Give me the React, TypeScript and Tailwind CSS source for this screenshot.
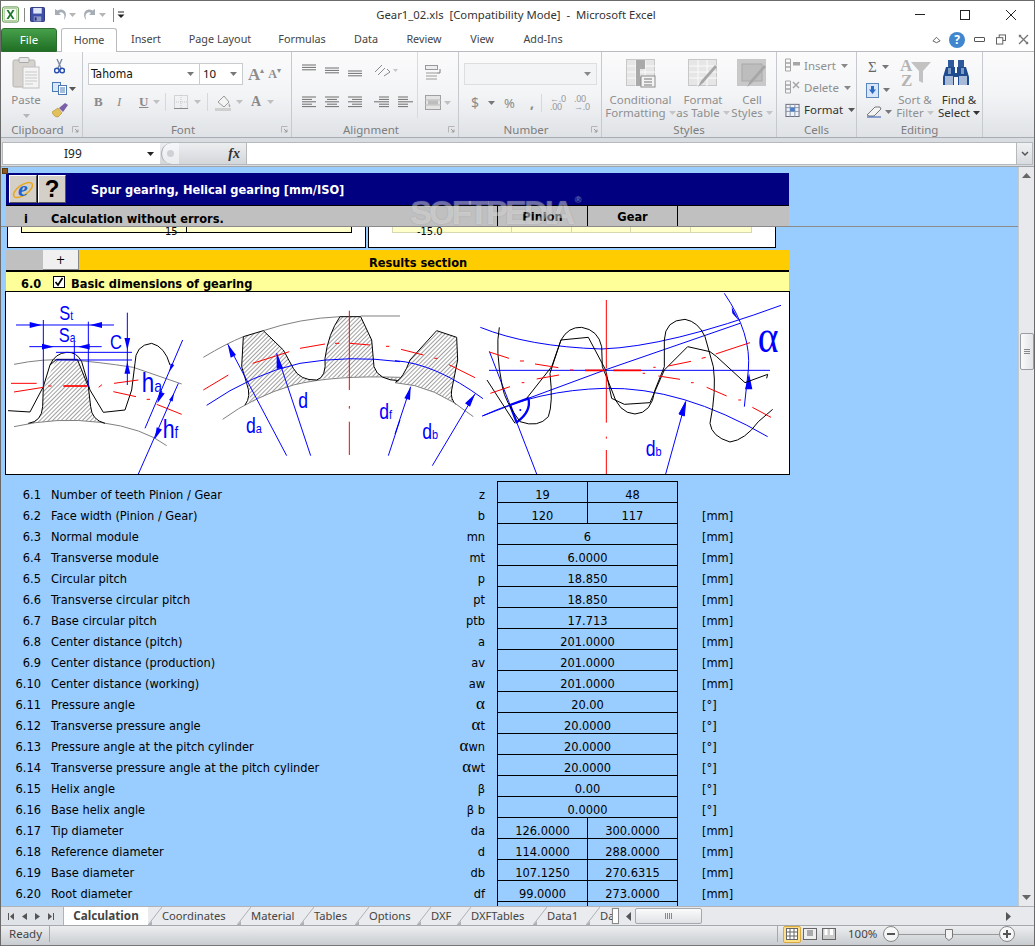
import React from "react";

const tahoma = "font-['DejaVu_Sans_Condensed','DejaVu_Sans',sans-serif]";

const Caret = ({ c = "#9a9a9a" }: { c?: string }) => (
  <svg width="7" height="4" viewBox="0 0 7 4" className="shrink-0"><path d="M0 0h7L3.500 4z" fill={c} /></svg>
);

const Lines = ({ rows }: { rows: [number, number][] }) => (
  <svg width="16" height="14" viewBox="0 0 16 14">
    {rows.map(([x, w], i) => (
      <rect key={i} x={x} y={i * 2.4 + 0.5} width={w} height="1" fill="#6f6f6f" />
    ))}
  </svg>
);

const Sep = () => <div className="w-px h-[18px] bg-[#d5d8dc]" />;

function ExcelLogo() {
  return (
    <svg width="17" height="17" viewBox="0 0 19 18">
      <rect x="0.500" y="0.500" width="18" height="17" rx="2" fill="#e9f4df" stroke="#4c8a3a" />
      <rect x="2.500" y="2.500" width="14" height="13" fill="#fff" stroke="#9fc58c" />
      <path d="M5 4l3.200 5L5 14h2.400L9.500 10.600 11.600 14H14l-3.200-5L14 4h-2.400L9.500 7.400 7.400 4z" fill="#1f7a2d" />
    </svg>
  );
}

function SaveIcon() {
  return (
    <svg width="15" height="15" viewBox="0 0 16 16">
      <rect x="0.500" y="0.500" width="15" height="15" rx="1" fill="#3f4fa8" stroke="#27307a" />
      <rect x="3.500" y="1" width="9" height="6" fill="#dfe6f7" />
      <rect x="4" y="10" width="8" height="5.500" fill="#8d99c9" />
      <rect x="5" y="11" width="2" height="3.500" fill="#27307a" />
    </svg>
  );
}

function UndoIcon({ flip }: { flip?: boolean }) {
  return (
    <svg width="14" height="13" viewBox="0 0 14 13" style={flip ? { transform: "scaleX(-1)" } : undefined}>
      <path d="M2 1v6h6L6 5c2-1.500 5-.5 5.500 3L11 12c2.500-3 2.500-7 .5-9C9.500 1 6.500 1 4.500 2.500z" fill="#a7adb5" />
    </svg>
  );
}

function PasteIcon() {
  return (
    <svg width="28" height="32" viewBox="0 0 28 32">
      <rect x="1" y="3" width="22" height="27" rx="1.500" fill="#d6d3cf" stroke="#b7b4b0" />
      <rect x="7" y="0.500" width="10" height="5" rx="1" fill="#e6e6e6" stroke="#aaa" />
      <rect x="11" y="10" width="16" height="21" fill="#f4f4f4" stroke="#c0c0c0" />
      <path d="M13 15h12M13 18h12M13 21h12M13 24h12M13 27h8" stroke="#c9c9c9" />
    </svg>
  );
}

function Scissors() {
  return (
    <svg width="11" height="15" viewBox="0 0 11 15">
      <path d="M3 0l4 9M8 0L4 9" stroke="#7e8aa0" strokeWidth="1.400" />
      <circle cx="2.800" cy="11.500" r="2.300" fill="none" stroke="#2a4fb0" strokeWidth="1.500" />
      <circle cx="8.200" cy="11.500" r="2.300" fill="none" stroke="#2a4fb0" strokeWidth="1.500" />
    </svg>
  );
}

function CopyIcon() {
  return (
    <svg width="15" height="13" viewBox="0 0 15 13">
      <rect x="0.500" y="0.500" width="8" height="9" fill="#dbe8f8" stroke="#4a79b5" />
      <rect x="6.500" y="3.500" width="8" height="9" fill="#fff" stroke="#4a79b5" />
      <path d="M8 6h5M8 8h5M8 10h5" stroke="#4a79b5" />
    </svg>
  );
}

function Brush() {
  return (
    <svg width="16" height="15" viewBox="0 0 16 15">
      <path d="M0 9l6-4 4 5-4 4C3 14 1 12 0 9z" fill="#e3c15a" stroke="#a98a2c" strokeWidth=".6" />
      <path d="M7 5l6-5 3 2-5 7z" fill="#7a5ea8" />
    </svg>
  );
}

function StylesIcon({ kind }: { kind: number }) {
  return (
    <svg width="30" height="29" viewBox="0 0 30 29">
      <rect x="0.500" y="0.500" width="28" height="26" fill={kind === 2 ? "#c9c9c9" : "#e6e6e6"} stroke="#c8c8c8" />
      {kind === 2 && <rect x="5" y="5" width="20" height="17" fill="#bdbdbd" stroke="#aaa" />}
      {kind !== 2 && <path d="M10 1v26M19 1v26M1 7h28M1 13h28M1 19h28" stroke="#fbfbfb" />}
      {kind === 0 && <path d="M10 1h9v9h-5v8h5v9h-9z" fill="#a9a9a9" />}
      {kind === 0 && (
        <g>
          <rect x="15" y="17" width="14" height="11" fill="#f3f3f3" stroke="#8c8c8c" />
          <path d="M18 20h8M18 23h8M18 26h8" stroke="#777" />
        </g>
      )}
      {kind !== 0 && <path d="M29 8L15 24l-5 4 3-6L27 6z" fill="#a6a6a6" />}
    </svg>
  );
}

function FunnelAZ() {
  return (
    <svg width="33" height="32" viewBox="0 0 33 32">
      <text x="1" y="15" fontFamily="Liberation Serif" fontWeight="700" fontSize="17" fill="#b4b4b4">A</text>
      <text x="2" y="30" fontFamily="Liberation Serif" fontWeight="700" fontSize="17" fill="#b4b4b4">Z</text>
      <path d="M12 6h20l-8 9v12l-4-2V15z" fill="#c2c2c2" />
    </svg>
  );
}

function Binoculars() {
  return (
    <svg width="28" height="28" viewBox="0 0 28 28">
      <rect x="6" y="1" width="6" height="7" fill="#2e5a9c" />
      <rect x="16" y="1" width="6" height="7" fill="#2e5a9c" />
      <path d="M4 8h9v6h2V8h9l3 10v8H16v-8h-4v8H1v-8z" fill="#1e4c8e" />
      <rect x="3" y="17" width="8" height="9" fill="#a7bbd8" />
      <rect x="17" y="17" width="8" height="9" fill="#a7bbd8" />
      <rect x="6" y="9" width="3" height="6" fill="#7d9bc6" />
      <rect x="19" y="9" width="3" height="6" fill="#7d9bc6" />
    </svg>
  );
}

const Corner = () => (
  <svg width="7" height="7" viewBox="0 0 7 7" className="shrink-0">
    <path d="M0.500 6.500v-6h6" fill="none" stroke="#b5b5b5" />
    <path d="M3 3l3 3M6 3.500V6H3.500" fill="none" stroke="#9a9a9a" />
  </svg>
);

function Group({ w, label, corner, children }: { w: string; label: string; corner?: boolean; children: React.ReactNode }) {
  return (
    <div className={`${w} shrink-0 h-full flex flex-col border-r border-[#c6c9cd]`}>
      <div className="h-[68px] flex">{children}</div>
      <div className="flex-1 flex items-center justify-center relative text-[11.500px] text-[#7d7d7d] leading-none pt-[3px]">
        <span className={corner ? "pr-[8px]" : ""}>{label}</span>
        {corner && <div className="absolute right-[3px] top-[6px]"><Corner /></div>}
      </div>
    </div>
  );
}

function Ribbon() {
  const styleItems: [string, string, number, string][] = [
    ["Conditional", "Formatting", 0, "w-[76px] pl-[1px]"],
    ["Format", "as Table", 1, "w-[50px]"],
    ["Cell", "Styles", 2, "w-[48px]"],
  ];
  return (
    <div className="h-[86px] shrink-0 flex bg-gradient-to-b from-[#fbfbfc] via-[#f3f4f6] to-[#dfe2e6] border-b border-[#a9acb1] font-['Noto_Sans',sans-serif]">
      <Group w="w-[82px]" label="Clipboard" corner>
        <div className="w-[50px] flex flex-col items-center pt-[5px]">
          <PasteIcon />
          <span className="text-[11.500px] leading-none text-[#8a8a8a] mt-[5px]">Paste</span>
          <div className="mt-[8px]"><Caret c="#b5b5b5" /></div>
        </div>
        <div className="flex flex-col pt-[7px] gap-[8px] pl-[1px]">
          <div className="pl-[2px]"><Scissors /></div>
          <div className="flex items-center gap-[2px]"><CopyIcon /><Caret c="#555" /></div>
          <Brush />
        </div>
      </Group>
      <Group w="w-[209px]" label="Font" corner>
        <div className="flex flex-col pl-[5px] pt-[11px]">
          <div className="flex items-center h-[22px]">
            <div className="w-[112px] h-full bg-white border border-[#c9cccf] flex items-center justify-between pl-[2px] pr-[5px] text-[#111]">
              <span className={`${tahoma} text-[12px]`}>Tahoma</span><Caret c="#777" />
            </div>
            <div className="w-[43px] h-full bg-white border border-l-0 border-[#c9cccf] flex items-center justify-between pl-[3px] pr-[5px] text-[11.500px] text-[#111]">
              <span>10</span><Caret c="#777" />
            </div>
            <span className="ml-[5px] font-['Liberation_Serif',serif] font-bold text-[17px] text-[#8d8d8d] leading-none">A</span>
            <span className="text-[8px] text-[#8d8d8d] -mt-[8px] leading-none">▴</span>
            <span className="ml-[4px] font-['Liberation_Serif',serif] font-bold text-[12px] text-[#8d8d8d] leading-none">A</span>
            <span className="text-[8px] text-[#8d8d8d] -mt-[8px] leading-none">▾</span>
          </div>
          <div className="flex items-center h-[20px] mt-[7px] pl-[6px] text-[#8a8a8a] font-['Liberation_Serif',serif]">
            <span className="w-[23px] font-bold text-[13px]">B</span>
            <span className="w-[22px] italic text-[13px]">I</span>
            <span className="w-[14px] underline font-bold text-[13px]">U</span>
            <Caret c="#c0c0c0" />
            <div className="ml-[5px] mr-[8px]"><Sep /></div>
            <svg width="14" height="14" viewBox="0 0 14 14"><rect x=".5" y=".5" width="13" height="13" fill="none" stroke="#b5b5b5" strokeDasharray="1 1" /><path d="M7 0v14M0 7h14" stroke="#c5c5c5" strokeDasharray="1 1" /><path d="M0 13.500h14" stroke="#8a8a8a" /></svg>
            <div className="ml-[6px]"><Caret c="#c0c0c0" /></div>
            <div className="ml-[6px] mr-[7px]"><Sep /></div>
            <svg width="17" height="17" viewBox="0 0 17 17"><path d="M3 8l6-6 5 6-5 5z" fill="#f4f4f4" stroke="#999" /><path d="M14 9c1 2 2 3 1 4s-2-2-1-4z" fill="#aaa" /><rect x="0" y="14" width="16" height="3" fill="#cfcfcf" /></svg>
            <div className="ml-[4px]"><Caret c="#c0c0c0" /></div>
            <span className="ml-[8px] font-bold text-[14px] leading-none">A</span>
            <div className="ml-[6px]"><Caret c="#c0c0c0" /></div>
          </div>
        </div>
      </Group>
      <Group w="w-[167px]" label="Alignment" corner>
        <div className="w-[126px] flex flex-col pl-[9px] pt-[12px] border-r border-[#d8dade] mb-[2px]">
          <div className="flex items-start gap-[7px] h-[20px]">
            <Lines rows={[[1, 14], [1, 14], [1, 14]]} />
            <div className="mt-[3px]"><Lines rows={[[1, 14], [1, 14], [1, 14]]} /></div>
            <div className="mt-[6px]"><Lines rows={[[1, 14], [1, 14], [1, 14]]} /></div>
            <svg width="24" height="14" viewBox="0 0 24 14" className="ml-[4px]"><path d="M1 8l7-7M4 11l7-7M10 12l6-4-3-3" stroke="#8a8a8a" fill="none" /><path d="M19 5h5l-2.500 3z" fill="#c5c5c5" /></svg>
          </div>
          <div className="flex items-start gap-[7px] mt-[12px]">
            <Lines rows={[[1, 14], [1, 10], [1, 14], [1, 10], [1, 14]]} />
            <Lines rows={[[1, 14], [3, 10], [1, 14], [3, 10], [1, 14]]} />
            <Lines rows={[[1, 14], [5, 10], [1, 14], [5, 10], [1, 14]]} />
            <div className="ml-[4px]"><Lines rows={[[5, 10], [5, 10], [0, 15], [5, 10], [5, 10]]} /></div>
            <Lines rows={[[1, 10], [1, 10], [1, 15], [1, 10], [1, 10]]} />
          </div>
        </div>
        <div className="pl-[7px] pt-[13px] flex flex-col gap-[15px]">
          <svg width="17" height="15" viewBox="0 0 17 15"><rect x=".5" y=".5" width="12" height="4" fill="#eee" stroke="#999" /><path d="M1 8h11M1 11h11M1 14h11" stroke="#9a9a9a" /><path d="M15 4v4h-3" stroke="#7a7a7a" fill="none" /></svg>
          <div className="flex items-center gap-[3px]">
            <svg width="16" height="15" viewBox="0 0 16 15"><rect x=".5" y=".5" width="15" height="14" fill="#e4e4e4" stroke="#a0a0a0" /><path d="M0 5h16M0 10h16" stroke="#bbb" /><rect x="3" y="5.500" width="10" height="4" fill="#bdbdbd" /></svg>
            <Caret c="#c0c0c0" />
          </div>
        </div>
      </Group>
      <Group w="w-[143px]" label="Number" corner>
        <div className="flex flex-col pl-[5px] pt-[11px]">
          <div className="w-[133px] h-[22px] bg-[#f3f4f5] border border-[#dcdee0] flex items-center justify-end pr-[5px]"><Caret c="#888" /></div>
          <div className="flex items-center mt-[8px] h-[20px] text-[#8a8a8a] text-[14px] leading-none pl-[7px]">
            <span className="w-[14px] text-[14px]">$</span>
            <div className="ml-[3px] mr-[9px]"><Caret c="#777" /></div>
            <span className="text-[13px] w-[23px]">%</span>
            <span className="w-[14px] pl-[3px] font-bold">,</span>
            <div className="mr-[8px]"><Sep /></div>
            <span className="text-[9px] leading-[8px] text-[#999] w-[24px] tracking-tight">←.0<br />.00</span>
            <span className="text-[9px] leading-[8px] text-[#999] tracking-tight">.00<br />→.0</span>
          </div>
        </div>
      </Group>
      <Group w="w-[175px]" label="Styles">
        {styleItems.map(([a, b, k, w]) => (
          <div key={a} className={`${w} shrink-0 flex flex-col items-center pt-[7px] text-[11.500px] leading-[13px] text-[#8f8f8f] whitespace-nowrap`}>
            <StylesIcon kind={k} />
            <span className="mt-[5px]">{a}</span>
            <span className="flex items-center gap-[3px]">{b}<Caret c="#c5c5c5" /></span>
          </div>
        ))}
      </Group>
      <Group w="w-[80px]" label="Cells">
        <div className="flex flex-col pl-[8px] pt-[6px] gap-[7px] text-[11.500px] leading-[15px]">
          <div className="flex items-center gap-[3px] text-[#8f8f8f]">
            <svg width="16" height="15" viewBox="0 0 16 15"><path d="M.5 1h5v4h-5zM.5 5h5v4h-5zM.5 9h5v4h-5z" fill="none" stroke="#a5a5a5" /><rect x="8" y="4" width="7" height="3.500" fill="#a6a6a6" /></svg>
            Insert<div className="ml-[2px]"><Caret c="#888" /></div>
          </div>
          <div className="flex items-center gap-[3px] text-[#8f8f8f]">
            <svg width="16" height="15" viewBox="0 0 16 15"><path d="M.5 1h5v4h-5zM.5 5h5v4h-5zM.5 9h5v4h-5z" fill="none" stroke="#a5a5a5" /><path d="M8 2l6 6M14 2L8 8" stroke="#a6a6a6" strokeWidth="1.500" /></svg>
            Delete<div className="ml-[2px]"><Caret c="#888" /></div>
          </div>
          <div className="flex items-center gap-[3px] text-[#333] -ml-[1px]">
            <svg width="17" height="15" viewBox="0 0 17 16"><rect x="1.500" y="2.500" width="14" height="13" fill="#eef3fa" stroke="#667" /><path d="M1 6h15M1 10h15M6 2v14M11 2v14" stroke="#8a93a5" /><rect x="6" y="6" width="5" height="4" fill="#4a7ec8" /></svg>
            Format<div className="ml-[2px]"><Caret c="#555" /></div>
          </div>
        </div>
      </Group>
      <Group w="w-[126px]" label="Editing">
        <div className="flex flex-col pl-[9px] pt-[7px] gap-[6px] w-[36px] shrink-0">
          <div className="flex items-center gap-[5px] h-[16px] pl-[2px] font-['Liberation_Serif',serif] text-[15px] text-[#666]">Σ<Caret c="#777" /></div>
          <div className="flex items-center gap-[4px] h-[18px]">
            <svg width="13" height="15" viewBox="0 0 13 15"><rect x=".5" y=".5" width="12" height="14" fill="#d8e6f7" stroke="#5b86bd" /><path d="M6.500 11L3 6.500h2V3h3v3.500h2z" fill="#2a6ac8" /></svg>
            <Caret c="#777" />
          </div>
          <div className="flex items-center gap-[2px] h-[14px]">
            <svg width="17" height="12" viewBox="0 0 17 12"><path d="M1 9l8-8h5l1 2-7 7H3z" fill="#f4f4f4" stroke="#777" /><path d="M1 11h14" stroke="#2a56b0" /></svg>
            <Caret c="#777" />
          </div>
        </div>
        <div className="w-[44px] shrink-0 flex flex-col items-center pt-[4px] text-[11.500px] leading-[13px] text-[#8f8f8f] whitespace-nowrap">
          <FunnelAZ />
          <span className="mt-[5px]">Sort &amp;</span>
          <span className="flex items-center gap-[3px]">Filter<Caret c="#c5c5c5" /></span>
        </div>
        <div className="w-[44px] shrink-0 flex flex-col items-center pt-[7px] text-[11.500px] leading-[13px] text-[#333] whitespace-nowrap">
          <div className="-ml-[6px]"><Binoculars /></div>
          <span className="mt-[6px]">Find &amp;</span>
          <span className="flex items-center gap-[3px]">Select<Caret c="#333" /></span>
        </div>
      </Group>
    </div>
  );
}

function TitleBar() {
  return (
    <div className="h-[27px] shrink-0 relative flex items-center pl-[1px] font-['Noto_Sans',sans-serif] bg-white">
      <ExcelLogo />
      <div className="w-px h-[14px] bg-[#888] mx-[5px]" />
      <SaveIcon />
      <div className="ml-[8px]"><UndoIcon /></div>
      <div className="ml-[2px] mr-[7px]"><Caret c="#b5b5b5" /></div>
      <UndoIcon flip />
      <div className="ml-[2px] mr-[7px]"><Caret c="#b5b5b5" /></div>
      <div className="w-px h-[14px] bg-[#888] mr-[3px]" />
      <svg width="8" height="8" viewBox="0 0 8 8"><path d="M1 1h6" stroke="#222" /><path d="M0.500 3.500h7L4 7z" fill="#222" /></svg>
      <div className="flex-1 text-center text-[11.300px] text-[#333] whitespace-pre pr-[127px] leading-none">Gear1_02.xls  [Compatibility Mode]  -  Microsoft Excel</div>
      <div className="absolute right-0 top-0 h-[27px] flex items-center">
        <div className="w-[45px] flex justify-center"><div className="w-[10px] h-px bg-[#222]" /></div>
        <div className="w-[46px] flex justify-center"><div className="w-[10px] h-[10px] border border-[#222]" /></div>
        <div className="w-[46px] flex justify-center">
          <svg width="10" height="10" viewBox="0 0 10 10"><path d="M0 0l10 10M10 0L0 10" stroke="#222" /></svg>
        </div>
      </div>
    </div>
  );
}

function Tabs() {
  const items: [string, string][] = [
    ["Insert", "w-[58px]"], ["Page Layout", "w-[90px]"], ["Formulas", "w-[74px]"], ["Data", "w-[54px]"],
    ["Review", "w-[62px]"], ["View", "w-[54px]"], ["Add-Ins", "w-[68px]"],
  ];
  return (
    <div className="h-[24px] shrink-0 flex items-end relative font-['Noto_Sans',sans-serif] text-[10.800px] bg-white border-b border-[#b8bbbf]">
      <div className="w-[56px] h-[24px] -mb-px rounded-t-[3px] bg-gradient-to-b from-[#46a04a] to-[#1f6f24] border border-[#2e6b2e] flex items-center justify-center text-white text-[11.500px]">File</div>
      <div className="ml-[4px] w-[56px] h-[24px] -mb-px rounded-t-[3px] bg-white border border-b-0 border-[#b8bbbf] flex items-center justify-center text-[#444] z-10">Home</div>
      {items.map(([t, w]) => (
        <div key={t} className={`${w} h-[23px] flex items-center justify-center text-[#444]`}>{t}</div>
      ))}
      <div className="flex-1" />
      <div className="flex items-center h-[23px] pr-[5px]">
        <svg width="9" height="8" viewBox="0 0 10 8"><path d="M1 5l4-4 4 4-4 2z" fill="none" stroke="#555" /></svg>
        <div className="ml-[8px] w-[16px] h-[16px] rounded-full bg-[#3f86cf] text-white text-[12px] font-bold flex items-center justify-center leading-none">?</div>
        <div className="ml-[9px] w-[11px] h-[5px] border border-[#555] rounded-[1px]" />
        <svg width="10" height="11" viewBox="0 0 11 11" className="ml-[11px]"><rect x="3.500" y=".5" width="7" height="6" fill="none" stroke="#555" /><rect x=".5" y="3.500" width="7" height="7" fill="#fff" stroke="#555" /></svg>
        <svg width="11" height="11" viewBox="0 0 11 11" className="ml-[12px]"><path d="M1 1l9 9M10 1l-9 9M3 1L1 3M10 8l-2 2" stroke="#777" strokeWidth="1.300" fill="none" /></svg>
      </div>
    </div>
  );
}

function FormulaBar() {
  return (
    <div className="h-[29px] shrink-0 bg-[#d9dce0] pt-[4px] pb-[1px] flex font-['Noto_Sans',sans-serif] border-b border-[#a0a3a8]">
      <div className="ml-[1px] w-[158px] bg-white border border-[#b5b8bc] border-r-0 flex items-center text-[12px] text-[#222] pr-[6px]">
        <span className="ml-[61px] flex-1">I99</span><Caret c="#222" />
      </div>
      <div className="w-[86px] bg-gradient-to-b from-[#eceef0] to-[#d4d7da] border-y border-[#b5b8bc] flex items-center pl-[1px] relative">
        <div className="w-[18px] h-full rounded-l-full border-l border-[#a5a8ad] bg-white/50 flex items-center justify-center"><div className="w-[7px] h-[7px] rounded-full bg-[#cfd1d4]" /></div>
        <span className="absolute right-[6px] font-['Liberation_Serif',serif] italic font-bold text-[14px] text-[#333] leading-none">fx</span>
      </div>
      <div className="flex-1 bg-white border border-[#b5b8bc]" />
      <div className="w-[16px] mr-[1px] border border-l-0 border-[#b5b8bc] bg-gradient-to-b from-[#f0f1f3] to-[#d8dbdf] flex items-center justify-center">
        <svg width="8" height="6" viewBox="0 0 8 6"><path d="M1 1l3 3 3-3" stroke="#555" strokeWidth="1.500" fill="none" /></svg>
      </div>
    </div>
  );
}

function Gears() {
  const red = "#ff0000", blue = "#0000ff", gray = "#808080";
  const Arrow = ({ x, y, a, s = 18 }: { x: number; y: number; a: number; s?: number }) => (
    <path d={`M0 0L${-s} ${-s * 0.24}V${s * 0.24}z`} fill={blue} transform={`translate(${x} ${y}) rotate(${a})`} />
  );
  const T = ({ x, y, s, c = 62, sub }: { x: number; y: number; s: string; c?: number; sub?: string }) => (
    <text transform={`translate(${x} ${y}) scale(.8 1)`} fontFamily="Liberation Sans, sans-serif" fontSize={c} fill={blue}>
      {s}{sub && <tspan fontSize={c * 0.62}>{sub}</tspan>}
    </text>
  );
  return (
    <svg width="783" height="182" viewBox="6 292 783 182" className="block">
      <defs>
        <pattern id="h" width="9" height="9" patternUnits="userSpaceOnUse" patternTransform="rotate(-45)">
          <rect width="9" height="3" fill="#a0a0a0" />
          <rect y="3" width="9" height="6" fill="#fff" />
        </pattern>
      </defs>
      <g transform="translate(0 290) scale(.33333)" fill="none" strokeWidth="3" strokeLinejoin="round">
        <path d="M170 208H232L265 290L272 350Q275 385 300 397Q200 385 90 400Q125 390 128 350L130 290Z" fill="url(#h)" />
        <path d="M42 223Q130 205 210 210T400 232L545 282" stroke={gray} />
        <path d="M42 410Q170 380 300 397T500 467" stroke={gray} />
        <path d="M24 362L90 366L130 290L150 225Q165 190 200 187Q230 185 245 215L270 300L310 367L375 360L395 300L405 220Q405 165 455 160Q495 170 510 225" stroke="#000" />
        <path d="M170 208H232M150 225L170 208M232 208L265 290L272 350Q275 390 315 400M130 290L128 350Q125 395 85 400" stroke="#000" />
        <path d="M33 280H110M42 306L130 292M145 288H155M296 292L306 284M342 280L415 270M340 305L408 320M440 328H450M470 343L545 373" stroke={red} />
        <path d="M190 288H262" stroke={red} strokeWidth="5" />
        <path d="M48 105H342M88 170H305M130 90V290M265 95V290M382 68V285M168 187H396M168 210H396M548 150L435 415M535 280L415 552M223 155V208" stroke={blue} />
        <Arrow x={125} y={105} a={0} s={36} /><Arrow x={270} y={105} a={180} s={36} />
        <Arrow x={162} y={170} a={0} s={36} /><Arrow x={233} y={170} a={180} s={36} />
        <Arrow x={382} y={180} a={90} s={36} /><Arrow x={382} y={215} a={-90} s={36} />
        <Arrow x={508} y={245} a={113} s={24} /><Arrow x={522} y={310} a={-67} s={24} />
        <Arrow x={472} y={340} a={113} s={36} /><Arrow x={464} y={448} a={113} s={36} />
        <T x={178} y={90} s="S" sub="t" /><T x={176} y={155} s="S" sub="a" />
        <T x={330} y={177} s="C" /><T x={425} y={305} s="h" c={84} sub="a" /><T x={488} y={444} s="h" c={80} sub="f" />
      </g>
      <g transform="translate(0 290) scale(.33333)" fill="none" strokeWidth="3" strokeLinejoin="round">
        <path d="M730 140L790 122L850 180L880 235Q900 272 950 270Q980 262 975 205Q985 130 1020 80H1082L1115 150L1122 230Q1135 272 1200 272V262Q1100 258 1050 262Q900 260 760 335L745 345Q755 320 740 280L725 230Z" fill="url(#h)" />
        <path d="M610 202Q680 160 730 140M790 122Q900 85 1020 80M1082 78H1200" stroke={gray} />
        <path d="M668 388Q760 320 880 285Q1000 255 1200 262" stroke={gray} />
        <path d="M735 345Q755 320 740 280L725 230L730 140L790 122L850 180L880 235Q900 272 950 270Q980 262 975 205Q985 130 1020 80H1082L1115 150L1122 230Q1135 272 1200 272" stroke="#000" />
        <path d="M610 300L685 255M758 220L868 185M900 175L975 162M1005 160H1018M1050 160L1110 165M1158 169H1168" stroke={red} />
        <path d="M1048 62V300M1048 348V356M1048 395V495" stroke={red} />
        <path d="M620 346Q760 250 900 220Q1050 195 1200 215" stroke={blue} />
        <path d="M683 162L860 497M830 190L932 497M1200 390L1165 497" stroke={blue} />
        <path d="M683 162L708 195L692 203zM830 190L850 236L830 236z" fill={blue} />
        <T x={738} y={428} s="d" sub="a" c={66} /><T x={895} y={355} s="d" c={66} /><T x={1138} y={388} s="d" sub="f" c={66} />
      </g>
      <g transform="translate(395 290) scale(.33333)" fill="none" strokeWidth="3" strokeLinejoin="round">
        <path d="M0 278Q25 265 45 210L125 122L185 142L188 210L170 300Q165 330 185 345L235 380Q120 285 0 278z" fill="url(#h)" />
        <path d="M0 278Q25 265 45 210L125 122L185 142L188 210L170 300Q165 330 185 345" stroke="#000" />
        <path d="M0 278Q120 285 235 380" stroke={gray} />
        <path d="M18 178L85 195M118 205H128M162 224L240 263" stroke={red} />
        <path d="M0 212Q120 220 264 326" stroke={blue} />
        <path d="M0 432L47 290M112 527L240 312" stroke={blue} />
        <path d="M47 290L45 330L28 325zM240 312L225 350L210 340z" fill={blue} />
        <T x={82} y={448} s="d" sub="b" c={66} />
        <path d="M256 112Q400 170 620 177Q820 170 1158 46" stroke={blue} />
        <path d="M262 378Q430 300 630 295Q860 290 1118 440" stroke={blue} />
        <path d="M282 241H1125" stroke={blue} />
        <path d="M262 378L400 325L630 240L1035 100" stroke={blue} />
        <path d="M283 184L425 552" stroke={blue} />
        <path d="M988 10Q1070 130 1060 240L1048 350" stroke={blue} />
        <path d="M1010 50L1032 92L1012 70zM1062 250L1072 298H1050z" fill={blue} />
        <path d="M345 345L400 325Q410 365 365 397z" stroke={blue} strokeWidth="7" />
        <circle cx="376" cy="360" r="3" fill={blue} />
        <path d="M812 552L872 335M872 335L868 378L852 372z" stroke={blue} fill={blue} />
        <path d="M313 112Q300 180 322 290Q330 335 375 395Q430 415 460 380Q475 340 465 250L498 150Q520 110 560 112Q610 120 620 170L622 230L650 300Q670 370 720 372Q770 370 780 300L808 230V150Q810 90 870 88Q910 95 930 140L955 230Q965 300 945 400Q950 440 1005 456Q1050 450 1090 395L1133 358" stroke="#000" />
        <path d="M276 270L360 400M395 325L470 230L498 150L580 142L632 240L650 325L688 343L765 338L808 240L878 170L945 185L965 200L1050 278L1118 253L1115 265" stroke="#000" />
        <path d="M283 186L342 205M375 213H387M420 222L490 233M525 240H535M743 250H750M775 232H782M790 258L855 268M820 228L888 214M920 205L932 202M962 192L1065 158M888 278H896M935 292L995 318M1030 330H1038M1072 352L1128 382M286 310L345 290M380 278H388M425 267L492 255" stroke={red} />
        <path d="M570 241H630M655 241H738" stroke={red} strokeWidth="5" />
        <path d="M634 30V235M634 250V398M634 440V446M634 480V552" stroke={red} />
        <T x={752} y={497} s="d" sub="b" c={66} />
        <text transform="translate(1088 187) scale(.85 1)" fontFamily="Liberation Serif, serif" fontSize={140} fill={blue}>α</text>
      </g>
    </svg>
  );
}

type Row = { n: string; d: string; s: string; a: string; b?: string; u?: string };
const rows: Row[] = [
  { n: "6.1", d: "Number of teeth Pinion / Gear", s: "z", a: "19", b: "48" },
  { n: "6.2", d: "Face width (Pinion / Gear)", s: "b", a: "120", b: "117", u: "[mm]" },
  { n: "6.3", d: "Normal module", s: "mn", a: "6", u: "[mm]" },
  { n: "6.4", d: "Transverse module", s: "mt", a: "6.0000", u: "[mm]" },
  { n: "6.5", d: "Circular pitch", s: "p", a: "18.850", u: "[mm]" },
  { n: "6.6", d: "Transverse circular pitch", s: "pt", a: "18.850", u: "[mm]" },
  { n: "6.7", d: "Base circular pitch", s: "ptb", a: "17.713", u: "[mm]" },
  { n: "6.8", d: "Center distance (pitch)", s: "a", a: "201.0000", u: "[mm]" },
  { n: "6.9", d: "Center distance (production)", s: "av", a: "201.0000", u: "[mm]" },
  { n: "6.10", d: "Center distance (working)", s: "aw", a: "201.0000", u: "[mm]" },
  { n: "6.11", d: "Pressure angle", s: "α", a: "20.00", u: "[°]" },
  { n: "6.12", d: "Transverse pressure angle", s: "αt", a: "20.0000", u: "[°]" },
  { n: "6.13", d: "Pressure angle at the pitch cylinder", s: "αwn", a: "20.0000", u: "[°]" },
  { n: "6.14", d: "Transverse pressure angle at the pitch cylinder", s: "αwt", a: "20.0000", u: "[°]" },
  { n: "6.15", d: "Helix angle", s: "β", a: "0.00", u: "[°]" },
  { n: "6.16", d: "Base helix angle", s: "β b", a: "0.0000", u: "[°]" },
  { n: "6.17", d: "Tip diameter", s: "da", a: "126.0000", b: "300.0000", u: "[mm]" },
  { n: "6.18", d: "Reference diameter", s: "d", a: "114.0000", b: "288.0000", u: "[mm]" },
  { n: "6.19", d: "Base diameter", s: "db", a: "107.1250", b: "270.6315", u: "[mm]" },
  { n: "6.20", d: "Root diameter", s: "df", a: "99.0000", b: "273.0000", u: "[mm]" },
  { n: "", d: "", s: "", a: "", b: "" },
];

function Sym({ s }: { s: string }) {
  if (s[0] === "α") {
    return <><span className="font-['Liberation_Serif',serif] text-[17px] leading-[14px]">α</span>{s.slice(1)}</>;
  }
  return <>{s}</>;
}

function DataRow({ r }: { r: Row }) {
  return (
    <div className="h-[21px] flex items-end text-[12.700px] leading-[17px] text-black">
      <div className="w-[40px] text-right shrink-0">{r.n}</div>
      <div className="w-[400px] pl-[10px] shrink-0">{r.d}</div>
      <div className="w-[44px] text-right shrink-0"><Sym s={r.s} /></div>
      <div className="ml-[12px] flex h-[21px] w-[181px] shrink-0 border-x border-b border-black leading-[15px]">
        <div className={`h-full flex items-end justify-center ${r.b !== undefined ? "w-[90px] border-r border-black" : "flex-1"}`}>{r.a}</div>
        {r.b !== undefined && <div className="flex-1 flex items-end justify-center">{r.b}</div>}
      </div>
      <div className="pl-[24px]">{r.u}</div>
    </div>
  );
}

function Sheet() {
  return (
    <div className={`flex-1 min-w-0 bg-[#99ccff] overflow-hidden relative ${tahoma}`}>
      <div className="w-[6px] h-[6px] border border-[#5a3a10] bg-[#8a5a20] absolute left-[1px] top-[1px]" />
      <div className="pt-[6px] border-b border-[#8a8a8a] h-[60px]">
        <div className="ml-[5px] w-[783px] h-[33px] bg-[#000080] flex items-center border-b border-black">
          <div className="ml-[3px] w-[28px] h-[28px] bg-[#d4d0c8] border border-t-white border-l-white border-r-[#555] border-b-[#555] flex items-center justify-center">
            <svg width="24" height="24" viewBox="0 0 24 24">
              <ellipse cx="12" cy="13" rx="11" ry="5" fill="none" stroke="#e8a820" strokeWidth="1.500" transform="rotate(-35 12 13)" />
              <text x="12" y="19" textAnchor="middle" fontFamily="Liberation Serif, serif" fontStyle="italic" fontWeight="700" fontSize="22" fill="#1a66cc">e</text>
            </svg>
          </div>
          <div className="ml-[1px] w-[28px] h-[28px] bg-[#d4d0c8] border border-t-white border-l-white border-r-[#555] border-b-[#555] flex items-center justify-center text-black text-[24px] font-['Liberation_Sans',sans-serif] font-bold leading-none">?</div>
          <div className="ml-[25px] text-white font-bold text-[12.700px] pt-[2px]">Spur gearing, Helical gearing [mm/ISO]</div>
        </div>
        <div className="ml-[5px] w-[783px] h-[20px] bg-[#c0c0c0] flex text-[12.700px] font-bold text-black">
          <div className="w-[45px] pl-[18px] pt-[4px] leading-[17px]">i</div>
          <div className="w-[446px] pt-[4px] leading-[17px]">Calculation without errors.</div>
          <div className="w-[90px] h-full border-l border-black flex items-center justify-center pt-[2px]">Pinion</div>
          <div className="w-[91px] h-full border-x border-black flex items-center justify-center pt-[2px]">Gear</div>
        </div>
      </div>
      <div className="ml-[5px] w-[783px] h-[23px]">
        <div className="flex h-[21px] relative">
          <div className="ml-[1px] w-[359px] h-[21px] bg-white border border-t-0 border-black">
            <div className="mx-[13px] h-[6px] bg-[#ffffcc] border border-t-0 border-black flex">
              <div className="w-[165px] border-r border-black" />
            </div>
          </div>
          <span className="absolute left-[159px] top-[-1px] text-[11px] leading-[12px]">15</span>
          <div className="ml-[2px] w-[408px] h-[21px] bg-white border border-t-0 border-black">
            <div className="mx-[23px] h-[6px] bg-[#ffffcc] border border-t-0 border-[#d8d8b0] flex">
              <div className="w-[119px] border-r border-[#d8d8b0]" />
              <div className="w-[60px] border-r border-[#d8d8b0]" />
              <div className="w-[59px] border-r border-[#d8d8b0]" />
              <div className="w-[60px] border-r border-[#d8d8b0]" />
            </div>
          </div>
          <span className="absolute left-[411px] top-[-1px] text-[11px] leading-[12px]">-15.0</span>
        </div>
      </div>
      <div className="ml-[5px] w-[783px]">
        <div className="h-[22px] flex bg-[#ffcc00] border-b-2 border-black">
          <div className="w-[37px] bg-[#c0c0c0]" />
          <div className="w-[36px] bg-[#f0f0f0] border-r border-b border-[#888] flex items-center justify-center text-[12.700px] leading-none pt-[2px]">+</div>
          <div className="flex-1 flex items-center justify-center font-bold text-[12.700px] pr-[32px] pt-[5px]">Results section</div>
        </div>
        <div className="h-[19px] bg-[#ffff99] flex items-center font-bold text-[12.700px]">
          <span className="ml-[15px] w-[32px] pt-[5px]">6.0</span>
          <div className="w-[12px] h-[12px] bg-white border border-black flex items-center justify-center">
            <svg width="10" height="10" viewBox="0 0 10 10"><path d="M1.500 5l2.500 3 4.500-7" stroke="#000" strokeWidth="1.700" fill="none" /></svg>
          </div>
          <span className="ml-[6px] pt-[5px]">Basic dimensions of gearing</span>
        </div>
      </div>
      <div className="ml-[4px] w-[785px] h-[184px] bg-white border border-black">
        <Gears />
      </div>
      <div className="pt-[6px]">
        <div className="h-px ml-[496px] w-[181px] bg-black -mb-px" />
        <div className="pt-px">
          {rows.map((r, i) => <DataRow key={i} r={r} />)}
        </div>
      </div>
    </div>
  );
}

function VScroll() {
  return (
    <div className="w-[16px] shrink-0 bg-[#e7e9ec] border-l border-[#c5c8cc] flex flex-col items-center">
      <div className="h-[17px] flex items-center"><svg width="9" height="5" viewBox="0 0 9 5"><path d="M0 5h9L4.500 0z" fill="#666" /></svg></div>
      <div className="h-[149px]" />
      <div className="w-[14px] h-[37px] bg-gradient-to-r from-[#fbfbfc] to-[#e2e4e7] border border-[#9a9da2] rounded-[2px] flex flex-col items-center justify-center gap-[1px]">
        <div className="w-[6px] h-px bg-[#888]" /><div className="w-[6px] h-px bg-[#888]" /><div className="w-[6px] h-px bg-[#888]" />
      </div>
      <div className="flex-1" />
      <div className="h-[17px] flex items-center"><svg width="9" height="5" viewBox="0 0 9 5"><path d="M0 0h9L4.500 5z" fill="#666" /></svg></div>
    </div>
  );
}

function SheetTabs() {
  const tabs: [string, string][] = [
    ["Coordinates", "w-[89px]"], ["Material", "w-[63px]"], ["Tables", "w-[55px]"], ["Options", "w-[62px]"],
    ["DXF", "w-[40px]"], ["DXFTables", "w-[76px]"], ["Data1", "w-[53px]"], ["Dat", "w-[25px]"],
  ];
  return (
    <div className="h-[19px] shrink-0 flex bg-[#dfe2e6] border-t border-[#b0b3b8] font-['Noto_Sans',sans-serif] text-[11.200px] text-[#444]">
      <div className="w-[63px] flex items-center pl-[7px] gap-[8px] border-r border-[#b0b3b8] shrink-0">
        <svg width="6" height="7" viewBox="0 0 6 7"><path d="M0 0h1v7H0zM6 0v7L2 3.500z" fill="#555" /></svg>
        <svg width="5" height="7" viewBox="0 0 5 7"><path d="M5 0v7L0 3.500z" fill="#555" /></svg>
        <svg width="5" height="7" viewBox="0 0 5 7"><path d="M0 0v7l5-3.500z" fill="#555" /></svg>
        <svg width="6" height="7" viewBox="0 0 6 7"><path d="M5 0h1v7H5zM0 0v7l4-3.500z" fill="#555" /></svg>
      </div>
      <div className="w-[84px] bg-white flex items-center justify-center font-bold text-[11.700px] h-[18px] leading-none shrink-0">Calculation</div>
      <div className="w-[464px] overflow-hidden flex h-[18px] shrink-0">
        {tabs.map(([t, w]) => (
          <div key={t} className={`${w} flex items-center shrink-0 relative pl-[14px] bg-[#e9ebee] leading-none`}>
            <svg width="14" height="18" viewBox="0 0 14 18" className="absolute left-0 top-0"><path d="M0 18L14 0" stroke="#aeb1b6" fill="none" /><path d="M0 18l4-4v4z" fill="#aeb1b6" /></svg>
            {t}
          </div>
        ))}
      </div>
      <div className="w-[7px] h-[16px] bg-white border border-[#888] shrink-0 mt-[1px]" />
      <div className="flex-1 flex items-center pl-[7px] pr-[5px] bg-[#e7e9ec]">
        <svg width="5" height="9" viewBox="0 0 5 9"><path d="M5 0v9L0 4.500z" fill="#555" /></svg>
        <div className="ml-[4px] w-[67px] h-[16px] bg-gradient-to-b from-[#fbfbfc] to-[#dfe2e5] border border-[#a5a8ad] rounded-[2px] flex items-center justify-center gap-[1px]">
          <div className="w-px h-[6px] bg-[#888]" /><div className="w-px h-[6px] bg-[#888]" /><div className="w-px h-[6px] bg-[#888]" /><div className="w-px h-[6px] bg-[#888]" />
        </div>
        <div className="flex-1" />
        <svg width="5" height="9" viewBox="0 0 5 9"><path d="M0 0v9l5-4.500z" fill="#555" /></svg>
        <div className="w-[18px]" />
      </div>
    </div>
  );
}

function StatusBar() {
  return (
    <div className="h-[21px] shrink-0 flex items-center pb-[3px] bg-gradient-to-b from-[#eceef0] to-[#c9ccd0] border-t border-[#a5a8ad] border-b border-b-[#777] font-['Noto_Sans',sans-serif] text-[11.500px] text-[#444]">
      <div className="w-[49px] pl-[8px] h-full flex items-center border-r border-[#a5a8ad] shrink-0">Ready</div>
      <div className="flex-1 h-full" />
      <div className="h-full w-px bg-[#a5a8ad] mr-[5px]" />
      <div className="w-[18px] h-[17px] bg-[#ffe08a] border border-[#d9a93c] rounded-[2px] flex items-center justify-center">
        <svg width="12" height="12" viewBox="0 0 12 12"><rect x=".5" y=".5" width="11" height="11" fill="#fff" stroke="#666" /><path d="M4 0v12M8 0v12M0 4h12M0 8h12" stroke="#666" /></svg>
      </div>
      <svg width="14" height="12" viewBox="0 0 14 12" className="ml-[2px]"><rect x=".5" y=".5" width="13" height="11" fill="#eee" stroke="#666" /><path d="M4 3h6M4 5h6M4 7h6" stroke="#666" /></svg>
      <svg width="14" height="12" viewBox="0 0 14 12" className="ml-[5px]"><rect x=".5" y=".5" width="13" height="11" fill="#ccc" stroke="#666" /><rect x="2.500" y="1" width="3" height="6" fill="#fff" /><rect x="8" y="1" width="3" height="6" fill="#fff" /></svg>
      <span className="ml-[12px] w-[27px] whitespace-nowrap">100%</span>
      <div className="ml-[8px] w-[16px] h-[16px] rounded-full border border-[#888] bg-white/70 flex items-center justify-center"><div className="w-[8px] h-[2px] bg-[#555]" /></div>
      <div className="w-[100px] h-px bg-[#999] relative">
        <svg width="8" height="12" viewBox="0 0 8 12" className="absolute left-[46px] -top-[5px]"><path d="M.5.5h7v8L4 11.500.5 8.500z" fill="#f2f2f2" stroke="#777" /></svg>
      </div>
      <div className="w-[16px] h-[16px] rounded-full border border-[#888] bg-white/70 flex items-center justify-center relative"><div className="w-[8px] h-[2px] bg-[#555]" /><div className="w-[2px] h-[8px] bg-[#555] absolute" /></div>
      <div className="w-[19px] shrink-0" />
    </div>
  );
}

export default function App() {
  return (
    <div className="relative w-[1035px] h-[946px] flex flex-col overflow-hidden bg-white border-x border-t border-[#6a6a6a]">
      <TitleBar />
      <Tabs />
      <Ribbon />
      <FormulaBar />
      <div className="flex-1 flex min-h-0">
        <Sheet />
        <VScroll />
      </div>
      <SheetTabs />
      <StatusBar />
      <div className="absolute left-[409px] top-[195px] pointer-events-none font-['Liberation_Sans',sans-serif] font-bold text-[33px] leading-none tracking-[-3px] text-white/35 [text-shadow:0_0_2px_rgba(120,120,120,0.3)]">SOFTPEDIA<span className="text-[9px] align-top tracking-normal ml-[3px]">®</span></div>
    </div>
  );
}
